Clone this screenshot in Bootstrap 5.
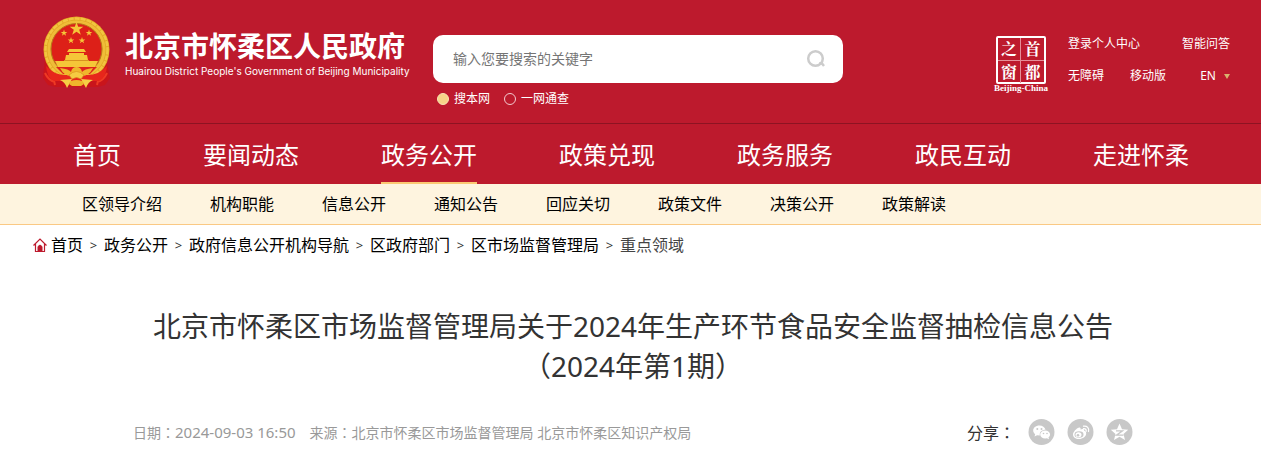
<!DOCTYPE html>
<html lang="zh-CN">
<head>
<meta charset="utf-8">
<meta name="viewport" content="width=device-width, initial-scale=1">
<title>北京市怀柔区人民政府</title>
<link rel="stylesheet" href="https://cdn.jsdelivr.net/npm/bootstrap@5.3.0/dist/css/bootstrap.min.css">
<style>
body{font-family:"Noto Sans","Noto Sans CJK SC",sans-serif;color:#333;background:#fff;font-size:16px;line-height:24px}
a{color:inherit;text-decoration:none}
.site-head{background:#bd1a2d;color:#fff;min-height:123px;padding:15px 30px 0 40px}
.brand-cn{font-family:"Noto Sans CJK SC",sans-serif;font-weight:700;font-size:28px;line-height:32px;margin-top:14px}
.brand-en{font-family:Inter,"Liberation Sans",sans-serif;font-weight:400;font-size:10px;line-height:16px;margin-top:2px}
.brand{width:393px;gap:13px}
.finder{flex:0 1 410px;margin-top:20px}
.search-box{background:#fff;border-radius:10px;height:48px;padding:0 17px 0 20px}
.search-box input{border:0;outline:0;background:none;font-size:14px;line-height:24px;padding:0;min-width:0}
.search-box input::placeholder{color:#757575;opacity:1}
.scope{font-size:12px;line-height:16px;padding:8px 4px 0;gap:14px}
.scope input{appearance:none;width:12px;height:12px;border:1px solid #f3c9ce;border-radius:50%;margin:0 5px 0 0}
.scope input:checked{background:#f7d488;border-color:#fae3b4}
.seal{width:56px;margin-top:21px}
.seal-grid{display:grid;grid-template-columns:1fr 1fr;width:50px;height:48px;border:2px solid #fff;border-radius:2px;font:700 16px/22px "Noto Serif CJK SC","Noto Sans CJK SC",sans-serif;text-align:center}
.seal-grid span:nth-child(odd){border-right:1px solid #e58e98}
.seal-grid span:nth-child(-n+2){border-bottom:1px solid #e58e98}
.seal-cap{font:700 9px/9px "Liberation Serif",serif}
.tools{width:162px;font-size:12px;line-height:16px;margin:21px 1px 0 19px}
.tools button{background:none;border:0;color:inherit;padding:0}
.tri{border:3px solid transparent;border-top:5px solid #d9b26d;border-bottom:0}
.main-menu{background:#bd1a2d;color:#fff;border-top:1px solid #8d1322;padding:0 72px 0 73px;font-size:24px;line-height:32px}
.main-menu a{padding:15px 0 11px;border-bottom:2px solid transparent}
.main-menu a.active{border-color:#fbc973}
.sub-menu{background:#fef4df;border-bottom:1px solid #fac984;padding:8px 82px;gap:0 48px;color:#000}
.crumbs{padding:8px 33px;color:#000}
.crumbs .current{color:#444}
.sep{font-size:13px;width:21px;text-align:center;color:#333}
.article{padding:0 128px 0 133px}
h1{font-size:28px;line-height:40px;font-weight:400;margin:41px 0 0;text-align:center}
.meta{font-size:14px;color:#999;margin-top:33px;min-height:26px;gap:14px}
.meta time{font-size:15px}
.colon{font-family:"Noto Sans CJK TC",sans-serif}
.share{font-size:16px;color:#333}
.share-label{margin-right:13px}
</style>
</head>
<body>
<header class="site-head d-flex align-items-start">
  <a href="#" class="brand d-flex flex-shrink-0">
    <svg width="72" height="76" viewBox="0 0 72 76" class="flex-shrink-0" aria-hidden="true">
      <path d="M5 44 3 63l5 7 8 2h41l8-2 5-7-4-19z" fill="#c9151b"/>
      <path d="M5 58q3 7 10 9M67 58q-3 7-10 9M12 57l3 13M60 57l-3 13" stroke="#ee3a24" stroke-width="2" fill="none"/>
      <circle cx="36.500" cy="34.500" r="33" fill="#e3a825"/>
      <circle cx="36.500" cy="34.500" r="31" fill="none" stroke="#f2c540" stroke-width="2.500" stroke-dasharray="5 1"/>
      <circle cx="36.500" cy="34.500" r="27.500" fill="none" stroke="#efbd38" stroke-width="3"/>
      <circle cx="36.500" cy="34" r="25.500" fill="#dd2018" stroke="#b9781b"/>
      <g fill="#f5c638">
        <path d="M36.500 7l1.700 4.800h5.100l-4.100 3 1.600 4.900-4.300-3-4.300 3 1.600-4.900-4.100-3h5.100z"/>
        <path id="sm" d="M24 14.500l.8 2.400h2.500l-2 1.500.8 2.400-2.100-1.500-2.100 1.500.8-2.400-2-1.500h2.500z"/>
        <use href="#sm" x="25"/><use href="#sm" x="7" y="7.500"/><use href="#sm" x="18" y="7.500"/>
        <path d="M29 34h15l2 3H27zM29 38h15v2H29zM26 40h21l1 5H25z"/>
        <path d="M15 46h43l-3 6H18z"/>
      </g>
      <path d="M24 45.500h25" stroke="#d79220"/>
      <path d="M16 52h41l-7 7H23z" fill="#df241b"/>
      <path d="M6 51q9 10 22 9h17q13 1 22-9-1 12-8 15H14q-7-3-8-15z" fill="#e7261b"/>
      <path d="M20 53q9 1 11 4 1-5 5.500-5T42 57q2-3 11-4-4 8-11 8l-5.500-2-5.500 2q-7 0-11-8z" fill="#f0b72c"/>
      <path d="M29 60q7.500-7 15 0l-3 4q-4.500-3-9 0z" fill="#f5cb42" stroke="#d8901e" stroke-width=".7"/>
      <path d="M20 65l12-1-5 9q-2-6-7-8zM53 65l-12-1 5 9q2-6 7-8z" fill="#f6ce45"/>
      <path d="M29 69q1-4 7.500-4t7.500 4l-3 2h-9z" fill="#efb42c"/>
    </svg>
    <span class="text-nowrap">
      <span class="brand-cn d-block">北京市怀柔区人民政府</span>
      <span class="brand-en d-block">Huairou District People's Government of Beijing Municipality</span>
    </span>
  </a>
  <form class="finder">
    <div class="search-box d-flex align-items-center">
      <input type="text" class="flex-grow-1" aria-label="搜索" placeholder="输入您要搜索的关键字">
      <button type="button" class="btn p-0 border-0 lh-1" aria-label="搜索"><svg width="20" height="20" viewBox="0 0 20 20" fill="none" stroke="#ccc" stroke-width="2.500"><circle cx="9.500" cy="9.500" r="7.300"/><path d="M13 14.500h3l2 2.500"/></svg></button>
    </div>
    <div class="scope d-flex">
      <label class="d-flex align-items-center"><input type="radio" name="scope" checked><span>搜本网</span></label>
      <label class="d-flex align-items-center"><input type="radio" name="scope"><span>一网通查</span></label>
    </div>
  </form>
  <a href="#" class="seal ms-auto d-flex flex-column align-items-center flex-shrink-0">
    <span class="seal-grid"><span>之</span><span>首</span><span>窗</span><span>都</span></span>
    <span class="seal-cap">Beijing-China</span>
  </a>
  <div class="tools flex-shrink-0">
    <div class="d-flex justify-content-between"><a href="#">登录个人中心</a><a href="#">智能问答</a></div>
    <div class="d-flex justify-content-between mt-3"><a href="#">无障碍</a><a href="#">移动版</a><button type="button" class="d-flex align-items-center gap-2 ms-2">EN<span class="tri"></span></button></div>
  </div>
</header>
<nav class="main-menu d-flex justify-content-between text-nowrap" aria-label="主导航">
  <a href="#">首页</a><a href="#">要闻动态</a><a href="#" class="active">政务公开</a><a href="#">政策兑现</a><a href="#">政务服务</a><a href="#">政民互动</a><a href="#">走进怀柔</a>
</nav>
<nav class="sub-menu d-flex flex-wrap" aria-label="子导航">
  <a href="#">区领导介绍</a><a href="#">机构职能</a><a href="#">信息公开</a><a href="#">通知公告</a><a href="#">回应关切</a><a href="#">政策文件</a><a href="#">决策公开</a><a href="#">政策解读</a>
</nav>
<nav class="crumbs d-flex flex-wrap align-items-center" aria-label="当前位置">
  <svg class="me-1" width="14" height="14" viewBox="0 0 14 14" fill="none" stroke="#bd1a2d" aria-hidden="true"><path d="M.5 7.500 7 1l6.500 6.500M2.500 6v7.500h9V6" stroke-width="1.200"/><path d="M5 13V8.500L7 7l2 1.500V13z" fill="#bd1a2d"/></svg>
  <a href="#">首页</a><span class="sep">&gt;</span><a href="#">政务公开</a><span class="sep">&gt;</span><a href="#">政府信息公开机构导航</a><span class="sep">&gt;</span><a href="#">区政府部门</a><span class="sep">&gt;</span><a href="#">区市场监督管理局</a><span class="sep">&gt;</span><span class="current">重点领域</span>
</nav>
<main class="article">
  <h1>北京市怀柔区市场监督管理局关于2024年生产环节食品安全监督抽检信息公告<br>（2024年第1期）</h1>
  <div class="meta d-flex align-items-center">
    <span>日期<span class="colon" lang="zh-TW">：</span><time datetime="2024-09-03T16:50">2024-09-03 16:50</time></span>
    <span>来源<span class="colon" lang="zh-TW">：</span>北京市怀柔区市场监督管理局 北京市怀柔区知识产权局</span>
    <div class="share d-flex align-items-center ms-auto">
      <span class="share-label">分享<span class="colon" lang="zh-TW">：</span></span>
      <a href="#" class="lh-1 me-2 pe-1" aria-label="微信"><svg width="27" height="26" viewBox="0 0 26 26"><circle cx="13" cy="13" r="13" fill="#c8c8c8"/><path d="M11 6.500c-4 0-6.300 2.500-6.300 5 0 1.600.8 2.800 2 3.700L6 17.500l2.500-1.300 2.800.3c-.5-3.500 2-5.700 5.700-5.700-.7-2.600-3-4.300-6-4.300z" fill="#fff"/><path d="M16.700 11.500c-3 0-5 1.800-5 4s2 4 5 4l1.800-.3 2 1-.5-1.900c1-.7 1.600-1.700 1.600-2.800 0-2.200-2.100-4-4.900-4z" fill="#fff"/><g fill="#c8c8c8"><circle cx="8.800" cy="10" r="1"/><circle cx="13" cy="10" r="1"/><circle cx="15" cy="14.500" r=".8"/><circle cx="18.500" cy="14.500" r=".8"/></g></svg></a>
      <a href="#" class="lh-1 me-2 pe-1" aria-label="微博"><svg width="27" height="26" viewBox="0 0 26 26"><circle cx="13" cy="13" r="13" fill="#c8c8c8"/><path d="M11.500 8.500c1-.4 2 .2 1.500 2 2-1 4.200-.7 3.700 1.300 1.500.5 2 1.300 2 2.700 0 3-3.500 5.500-7.200 5.500S5.500 18.200 5.500 15.500c0-2.500 3.500-6.200 6-7z" fill="#fff"/><ellipse cx="11.500" cy="15.500" rx="4.500" ry="3.300" fill="#c8c8c8"/><ellipse cx="11" cy="15.800" rx="3" ry="2.500" fill="#fff"/><circle cx="10.500" cy="16.300" r="1.300" fill="#c8c8c8"/><path d="M16 7.200c3.500-.7 6 2 5 5.300M16 9.700c1.900-.3 3.100 1 2.600 2.600" fill="none" stroke="#fff" stroke-width="1.300" stroke-linecap="round"/></svg></a>
      <a href="#" class="lh-1" aria-label="QQ空间"><svg width="27" height="26" viewBox="0 0 26 26"><circle cx="13" cy="13" r="13" fill="#c8c8c8"/><path d="M13 4.500l2.500 5.700 6.200.6-4.700 4.100 1.500 6.100-5.500-3.200L7.500 21 9 14.900l-4.700-4.100 6.200-.6z" fill="#fff"/><path d="M9.500 11.800h6.500l-6 4.400h7" fill="none" stroke="#c8c8c8" stroke-width="1.300"/></svg></a>
    </div>
  </div>
</main>
<script src="https://cdn.jsdelivr.net/npm/bootstrap@5.3.0/dist/js/bootstrap.bundle.min.js"></script>
</body>
</html>
